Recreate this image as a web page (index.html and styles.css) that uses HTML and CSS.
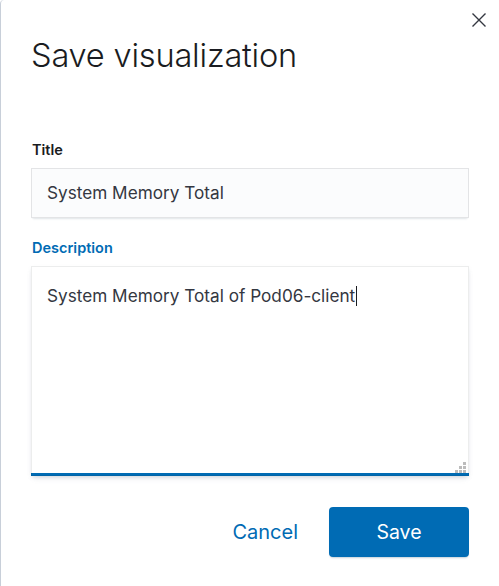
FILE: index.html
```html
<!DOCTYPE html>
<html lang="en">
<head>
<meta charset="utf-8">
<title>Save visualization</title>
<link rel="stylesheet" href="styles.css">
</head>
<body>
<div class="modal">
  <button class="close" aria-label="Close">
    <svg width="16" height="16" viewBox="0 0 16 16"><path d="M1.5 1.5 L14.5 14.5 M14.5 1.5 L1.5 14.5" stroke="#343741" stroke-width="1.4" fill="none"/></svg>
  </button>
  <header class="modal-header">
    <h1 class="modal-title">Save visualization</h1>
  </header>
  <form class="modal-body">
    <div class="field">
      <label class="label">Title</label>
      <div class="input">System Memory Total</div>
    </div>
    <div class="field field-desc">
      <label class="label label-active">Description</label>
      <div class="textarea">
        <span class="ta-text">System Memory Total of Pod06-client</span><span class="caret"></span>
        <span class="grip">
          <i class="d d1"></i>
          <i class="d d2"></i><i class="d d3"></i>
          <i class="d d4"></i><i class="d d5"></i><i class="d d6"></i>
        </span>
      </div>
    </div>
  </form>
  <footer class="modal-footer">
    <button class="btn-empty" type="button">Cancel</button>
    <button class="btn-primary" type="button">Save</button>
  </footer>
</div>
</body>
</html>
```

FILE: styles.css
```css
* { box-sizing: border-box; }
html, body {
  margin: 0;
  padding: 0;
  background: #fff;
}
body {
  font-family: Inter, "Noto Sans", "Liberation Sans", sans-serif;
  color: #343741;
  width: 499px;
  height: 586px;
  overflow: hidden;
}
.modal {
  position: relative;
  height: 586px;
  border-left: 1px solid #c8cfd9;
  border-top-left-radius: 4px;
  display: flex;
  flex-direction: column;
}
.close {
  position: absolute;
  top: 12px;
  right: 12px;
  width: 16px;
  height: 16px;
  padding: 0;
  border: 0;
  background: none;
  display: flex;
}
.modal-header {
  padding: 35px 30px 0 30px;
}
.modal-title {
  margin: 0;
  font-size: 32.6px;
  line-height: 40px;
  font-weight: 300;
  color: #1a1c21;
  letter-spacing: -0.2px;
}
.modal-body {
  margin: 0;
  padding: 65px 30px 0 30px;
  display: flex;
  flex-direction: column;
}
.field {
  display: flex;
  flex-direction: column;
}
.field-desc {
  margin-top: 20px;
}
.label {
  font-size: 14.5px;
  line-height: 20px;
  font-weight: 600;
  color: #1a1c21;
  padding-left: 1px;
  margin-bottom: 8px;
}
.label-active {
  color: #006bb4;
}
.input {
  height: 50px;
  background: #fbfcfd;
  box-shadow: 0 1px 1px -1px rgba(152,162,179,.25), 0 3px 2px -2px rgba(152,162,179,.25), inset 0 0 0 1px rgba(16,22,26,.1);
  font-size: 17.2px;
  line-height: 50px;
  padding: 0 16px;
  color: #343741;
}
.textarea {
  position: relative;
  height: 210px;
  background: #fff;
  box-shadow: 0 2px 4px -1px rgba(152,162,179,.3), 0 4px 6px -3px rgba(152,162,179,.3), inset 0 0 0 1px rgba(16,22,26,.08), inset 0 -3px 0 0 #006bb4;
  font-size: 17.2px;
  line-height: 24px;
  padding: 18px 16px;
  color: #343741;
}
.caret {
  display: inline-block;
  width: 1px;
  height: 20px;
  background: #1a1c21;
  vertical-align: -4px;
  margin-left: 1px;
}
.grip {
  position: absolute;
  right: 3px;
  bottom: 3px;
  width: 12px;
  height: 11px;
}
.d {
  position: absolute;
  width: 3px;
  height: 3px;
  background: #bcbcbc;
}
.d1 { right: 0; top: 0; }
.d2 { right: 4px; top: 4px; }
.d3 { right: 0; top: 4px; }
.d4 { right: 8px; top: 8px; }
.d5 { right: 4px; top: 8px; }
.d6 { right: 0; top: 8px; }
.modal-footer {
  display: flex;
  justify-content: flex-end;
  align-items: center;
  padding: 31px 30px 0 30px;
  gap: 20px;
}
.btn-empty {
  border: 0;
  background: none;
  font-family: inherit;
  font-size: 20px;
  color: #006bb4;
  padding: 0 11px 0 12px;
  height: 50px;
}
.btn-primary {
  border: 0;
  width: 140px;
  height: 50px;
  border-radius: 4px;
  background: #006bb4;
  color: #fff;
  font-family: inherit;
  font-size: 19.5px;
  font-weight: 400;
  box-shadow: 0 2px 2px -1px rgba(54,97,126,.3);
}
```
